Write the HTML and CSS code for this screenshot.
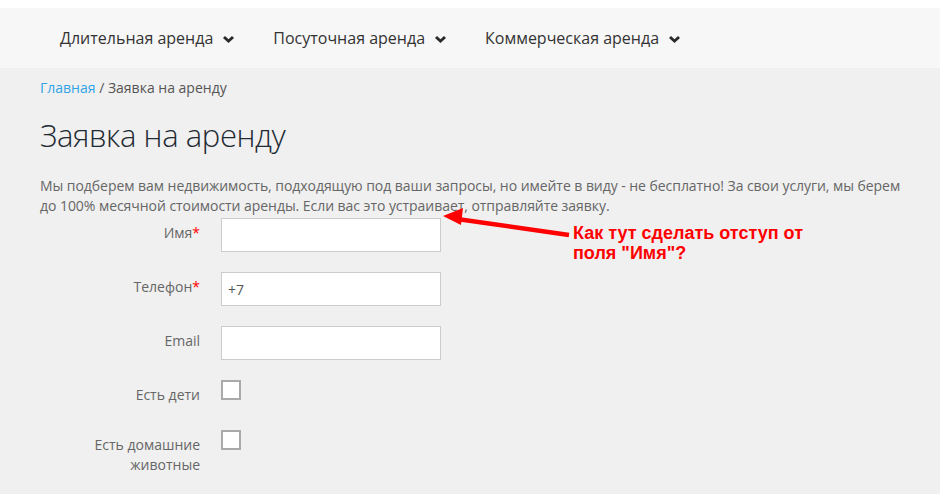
FILE: index.html
```html
<!DOCTYPE html>
<html lang="ru">
<head>
	<meta charset="UTF-8">
	<title>Заявка на аренду</title>
	<link rel="stylesheet" href="styles.css">
</head>
<body>
	<div class="top"></div>
	<!--меню-->
	<div class="nav">
		<ul class="menu">
			<li>Длительная аренда<svg class="caret" width="11" height="7" viewBox="0 0 11 7"><polygon points="0,2 2,0 5.5,3.2 9,0 11,2 5.5,7"/></svg></li>
			<li>Посуточная аренда<svg class="caret" width="11" height="7" viewBox="0 0 11 7"><polygon points="0,2 2,0 5.5,3.2 9,0 11,2 5.5,7"/></svg></li>
			<li>Коммерческая аренда<svg class="caret" width="11" height="7" viewBox="0 0 11 7"><polygon points="0,2 2,0 5.5,3.2 9,0 11,2 5.5,7"/></svg></li>
		</ul>
	</div>

	<div class="page">
		<div class="crumbs"><a href="#">Главная</a> / Заявка на аренду</div>
		<h1>Заявка на аренду</h1>
		<p class="intro">Мы подберем вам недвижимость, подходящую под ваши запросы, но имейте в виду - не бесплатно! За свои услуги, мы берем до 100% месячной стоимости аренды. Если вас это устраивает, отправляйте заявку.</p>

		<form class="form">
			<div class="row">
				<label>Имя<i>*</i></label>
				<input type="text" class="field">
			</div>
			<div class="row">
				<label>Телефон<i>*</i></label>
				<input type="text" class="field" value="+7">
			</div>
			<div class="row">
				<label>Email</label>
				<input type="text" class="field">
			</div>
			<div class="row">
				<label>Есть дети</label>
				<span class="check"></span>
			</div>
			<div class="row">
				<label>Есть домашние животные</label>
				<span class="check"></span>
			</div>
		</form>

		<!--пометка-->
		<svg class="arrow" width="140" height="40" viewBox="0 0 140 40">
			<line x1="16" y1="12" x2="128" y2="28" stroke="#f00" stroke-width="4.5"/>
			<polygon points="2,9 22,1 20,18" fill="#f00"/>
		</svg>
		<div class="note">Как тут сделать отступ от<br>поля "Имя"?</div>
	</div>
</body>
</html>
```

FILE: styles.css
```css
*{
	padding: 0;
	margin: 0;
	box-sizing: border-box;
}
body{
	background-color: #f0f0f0;
	font-family: "Open Sans", Arial, sans-serif;
	color: #666;
}
.top{
	height: 8px;
	background: #fff;
}
.nav{
	background: #f7f7f7;
	height: 60px;
}
.menu{
	display: flex;
	list-style: none;
	padding-left: 60px;
	gap: 0 39px;
}
.menu li{
	font-size: 16px;
	line-height: 60px;
	color: #333;
}
.caret{
	fill: #2a2a2a;
	margin-left: 10px;
	vertical-align: 1px;
}
.page{
	position: relative;
	padding: 10px 40px 0;
}
.crumbs{
	font-size: 14px;
	line-height: 20px;
	color: #555;
}
.crumbs a{
	color: #2fa4e7;
	text-decoration: none;
}
h1{
	font-size: 31px;
	font-weight: 300;
	color: #1f2a33;
	margin-top: 15px;
	line-height: 44px;
	letter-spacing: -0.4px;
}
.intro{
	font-size: 14px;
	line-height: 20px;
	margin-top: 19px;
	width: 868px;
	letter-spacing: -0.05px;
}
.form{
	display: flex;
	flex-direction: column;
	gap: 20px;
	margin-top: 2px;
}
.row{
	display: flex;
	align-items: flex-start;
	gap: 21px;
}
.row label{
	width: 160px;
	text-align: right;
	font-size: 14px;
	line-height: 20px;
	padding-top: 5px;
}
.row label i{
	font-style: normal;
	color: #f00;
}
.field{
	width: 220px;
	height: 34px;
	border: 1px solid #ccc;
	background: #fff;
	font-family: "Open Sans", Arial, sans-serif;
	font-size: 14px;
	color: #555;
	padding: 0 6px;
}
.check{
	width: 20px;
	height: 20px;
	border: 2px solid #aaa;
	background: #fff;
	margin-bottom: 10px;
}
.arrow{
	position: absolute;
	left: 441px;
	top: 139px;
}
.note{
	position: absolute;
	left: 573px;
	top: 155px;
	font-family: "Liberation Sans", Arial, sans-serif;
	font-weight: bold;
	font-size: 18px;
	line-height: 20px;
	color: #f00;
}
```
